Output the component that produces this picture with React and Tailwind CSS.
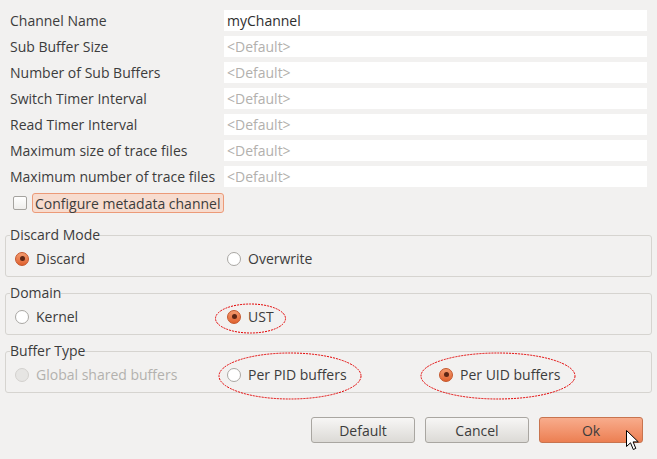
import React from 'react';

const fields = [
  { label: 'Channel Name', value: 'myChannel' },
  { label: 'Sub Buffer Size' },
  { label: 'Number of Sub Buffers' },
  { label: 'Switch Timer Interval' },
  { label: 'Read Timer Interval' },
  { label: 'Maximum size of trace files' },
  { label: 'Maximum number of trace files' },
];

function Radio({ checked, disabled, label }) {
  let dot = 'bg-white border-[#a9a7a3]';
  if (checked) dot = 'bg-gradient-to-b from-[#f39a6e] to-[#e0622e] border-[#c4552a]';
  if (disabled) dot = 'bg-[#e6e5e3] border-[#d3d1ce]';
  return (
    <div className="flex items-center gap-[7px]">
      <div className={`w-[14px] h-[14px] rounded-full border flex items-center justify-center ${dot}`}>
        {checked && <div className="w-[5px] h-[5px] rounded-full bg-[#5b2514]" />}
      </div>
      <span className={`whitespace-nowrap ${disabled ? 'text-[#b3b1ae]' : 'text-[#3c3c3c]'}`}>{label}</span>
    </div>
  );
}

function Group({ title, children, className = '' }) {
  return (
    <fieldset className={`border border-[#d6d4d0] rounded-[3px] ${className}`}>
      <legend className="ml-[4px] px-0 leading-[18px] text-[#3c3c3c]">{title}</legend>
      <div className="grid grid-cols-[212px_212px_1fr] h-[32px] items-center pl-[9px] pb-[3px]">
        {children}
      </div>
    </fieldset>
  );
}

function Button({ children, primary }) {
  const look = primary
    ? 'bg-gradient-to-b from-[#f8ac8c] to-[#ec7f52] border-[#c8744f]'
    : 'bg-gradient-to-b from-[#f7f6f5] to-[#dcdad6] border-[#a9a6a1]';
  return (
    <button className={`w-[104px] h-[26px] rounded-[3px] border text-[#3c3c3c] ${look}`}>
      {children}
    </button>
  );
}

export default function App() {
  return (
    <div
      className="relative w-[657px] h-[459px] bg-[#f2f1f0] px-[5px] pt-[10px] text-[14px] text-[#3c3c3c] overflow-hidden"
      style={{ fontFamily: '"Open Sans", "Noto Sans", sans-serif' }}
    >
      <div className="grid grid-cols-[214px_1fr] gap-y-[5px] px-[5px]">
        {fields.map((f) => (
          <React.Fragment key={f.label}>
            <div className="h-[21px] flex items-center whitespace-nowrap">{f.label}</div>
            <div className="h-[21px] bg-white flex items-center pl-[3px]">
              {f.value ? (
                <span className="text-[#2e2e2e]">{f.value}</span>
              ) : (
                <span className="text-[#b2b0ad]">&lt;Default&gt;</span>
              )}
            </div>
          </React.Fragment>
        ))}
      </div>

      <div className="mt-[6px] flex items-center">
        <div className="ml-[8px] w-[14px] h-[14px] rounded-[2px] border border-[#a5a39f] bg-gradient-to-b from-white to-[#efeeec]" />
        <div className="ml-[5px] h-[20px] flex items-center pl-[2px] pr-[3px] whitespace-nowrap rounded-[3px] border border-[#ec9a78] bg-[#f7dccf]">
          Configure metadata channel
        </div>
      </div>

      <Group title="Discard Mode" className="mt-[13px]">
        <Radio checked label="Discard" />
        <Radio label="Overwrite" />
      </Group>

      <Group title="Domain" className="mt-[7px]">
        <Radio label="Kernel" />
        <Radio checked label="UST" />
      </Group>

      <Group title="Buffer Type" className="mt-[7px]">
        <Radio disabled label="Global shared buffers" />
        <Radio label="Per PID buffers" />
        <Radio checked label="Per UID buffers" />
      </Group>

      <div className="mt-[24px] flex justify-end gap-[10px] pr-[9px]">
        <Button>Default</Button>
        <Button>Cancel</Button>
        <Button primary>Ok</Button>
      </div>

      {/* hand-drawn red annotation marks */}
      <svg className="absolute left-0 top-0 pointer-events-none" width="657" height="459">
        <g fill="none" stroke="#e30000" strokeWidth="1" strokeDasharray="2 1">
          <ellipse cx="250.5" cy="318.5" rx="35" ry="14.5" />
          <ellipse cx="290" cy="376" rx="71" ry="23" />
          <ellipse cx="498" cy="376" rx="77" ry="23" />
        </g>
      </svg>

      {/* mouse pointer */}
      <svg className="absolute left-[626px] top-[430px]" width="14" height="22" viewBox="0 0 14 22">
        <path
          d="M0.5 0.5 L0.5 16.5 L4.5 12.8 L7.3 19.5 L9.8 18.4 L7.1 11.9 L12.3 11.9 Z"
          fill="white"
          stroke="black"
          strokeWidth="1"
          strokeLinejoin="round"
        />
      </svg>
    </div>
  );
}
